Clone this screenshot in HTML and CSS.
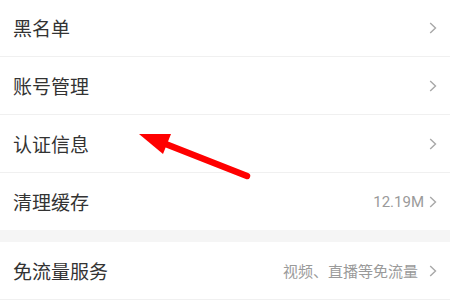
FILE: index.html
```html
<!DOCTYPE html>
<html lang="zh-CN">
<head>
<meta charset="utf-8">
<link rel="stylesheet" href="styles.css">
</head>
<body>
<div class="page">
  <div class="group">
    <div class="row"><span class="label">黑名单</span><span class="right"><svg class="chev" viewBox="0 0 8 12"><polyline points="1.2,1 6.5,6 1.2,11"/></svg></span></div>
    <div class="row"><span class="label">账号管理</span><span class="right"><svg class="chev" viewBox="0 0 8 12"><polyline points="1.2,1 6.5,6 1.2,11"/></svg></span></div>
    <div class="row"><span class="label">认证信息</span><span class="right"><svg class="chev" viewBox="0 0 8 12"><polyline points="1.2,1 6.5,6 1.2,11"/></svg></span></div>
    <div class="row"><span class="label">清理缓存</span><span class="right"><span class="value">12.19M</span><svg class="chev" viewBox="0 0 8 12"><polyline points="1.2,1 6.5,6 1.2,11"/></svg></span></div>
  </div>
  <div class="gap"></div>
  <div class="group">
    <div class="row"><span class="label">免流量服务</span><span class="right"><span class="value value--wide">视频、直播等免流量</span><svg class="chev" viewBox="0 0 8 12"><polyline points="1.2,1 6.5,6 1.2,11"/></svg></span></div>
  </div>
  <svg class="arrow" viewBox="0 0 450 300">
    <line x1="247" y1="176" x2="158" y2="141" />
    <polygon points="139,134 171,134 163,154" />
  </svg>
</div>
</body>
</html>
```

FILE: styles.css
```css
html, body {
  margin: 0;
  padding: 0;
  background: #ffffff;
}
.page {
  position: relative;
  width: 450px;
  height: 300px;
  overflow: hidden;
  font-family: Roboto, "Noto Sans CJK SC", sans-serif;
}
.group {
  display: flex;
  flex-direction: column;
}
.group:first-child {
  margin-top: -1px;
}
.row {
  height: 57px;
  display: flex;
  align-items: center;
  justify-content: space-between;
  padding: 0 13px 0 13px;
  border-bottom: 1px solid #f0f0f0;
}
.group:first-child .row:last-child {
  border-bottom: none;
}
.label {
  font-size: 19px;
  color: #333333;
  letter-spacing: 0;
}
.right {
  display: flex;
  align-items: center;
}
.value {
  font-size: 15px;
  color: #9a9a9a;
  margin-right: 5px;
}
.value--wide {
  margin-right: 11px;
}
.chev {
  width: 8px;
  height: 12px;
  fill: none;
  stroke: #a8a8a8;
  stroke-width: 1.4;
}
.gap {
  height: 12px;
  background: #f5f5f5;
}
.arrow {
  position: absolute;
  left: 0;
  top: 0;
  width: 450px;
  height: 300px;
}
.arrow line {
  stroke: #ff0000;
  stroke-width: 6.5;
  stroke-linecap: round;
}
.arrow polygon {
  fill: #ff0000;
}
```
